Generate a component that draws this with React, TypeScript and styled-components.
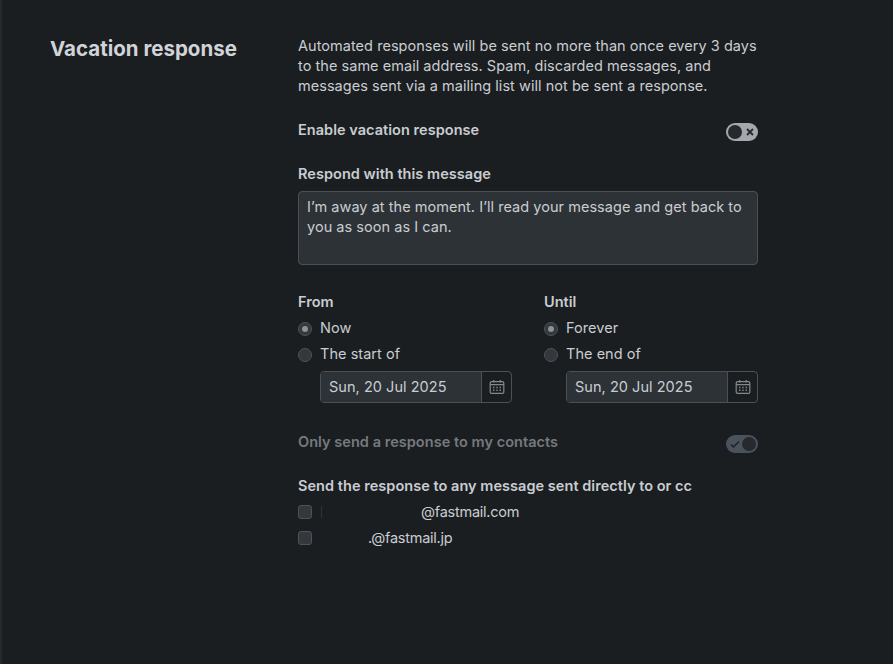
import React from 'react';
import styled, { createGlobalStyle } from 'styled-components';

const Global = createGlobalStyle`
  html, body { margin: 0; padding: 0; background: #1b1e21; }
  body { font-family: "Inter", "Liberation Sans", sans-serif; color: #c9cdd1; }
`;
const Page = styled.div`
  width: 893px; height: 664px; box-sizing: border-box; overflow: hidden;
  border-left: 2px solid #26292d; padding: 36px 0 0 48px;
  display: grid; grid-template-columns: 248px 460px; 
`;
const Title = styled.h2`
  margin: 0; font-size: 20.5px; line-height: 26px; font-weight: 700; color: #d0d3d7;
`;
const Column = styled.div`display: flex; flex-direction: column; font-size: 14.5px; line-height: 20px; letter-spacing: 0.04px;`;
const Intro = styled.p`margin: 0 0 24px; color: #c9cdd1;`;
const SwitchRow = styled.div<{ $gap: number; $muted?: boolean }>`
  display: flex; justify-content: space-between; align-items: flex-start; margin-bottom: ${p => p.$gap}px;
  font-weight: 600; color: ${p => (p.$muted ? '#76797d' : '#c9cdd1')};
`;
const Track = styled.span<{ $on?: boolean }>`
  width: 32px; height: 18px; border-radius: 9px; margin-top: 3px; box-sizing: border-box; padding: 2px;
  display: flex; align-items: center; justify-content: space-between; flex-direction: ${p => (p.$on ? 'row' : 'row-reverse')};
  background: ${p => (p.$on ? '#4a525b' : '#a5a8ad')};
`;
const Knob = styled.span`width: 14px; height: 14px; border-radius: 50%; background: #26292d; box-sizing: border-box;`;
const Label = styled.div`font-weight: 600; color: #c9cdd1; margin-bottom: 7px;`;
const Area = styled.div`
  box-sizing: border-box; height: 74px; padding: 5px 8px; margin-bottom: 27px; border-radius: 4px;
  background: #2d3237; border: 1px solid #4a5056; color: #c9cdd1;
`;
const Dates = styled.div`display: grid; grid-template-columns: 246px 214px; margin-bottom: 29px;`;
const DateLabel = styled(Label)`margin-bottom: 3px;`;
const ListLabel = styled(Label)`margin-bottom: 3px;`;
const Choice = styled.div`display: flex; align-items: center; gap: 8px; height: 26px;`;
const Radio = styled.span<{ $on?: boolean }>`
  width: 14px; height: 14px; border-radius: 50%; box-sizing: border-box; border: 1px solid #4d5359; background: #33383d;
  display: flex; align-items: center; justify-content: center; margin-top: 1px;
  &::after { content: ""; width: 6px; height: 6px; border-radius: 50%; background: ${p => (p.$on ? '#8d9196' : 'transparent')}; }
`;
const DateBox = styled.div`
  display: flex; height: 32px; box-sizing: border-box; margin: 4px 0 0 22px; width: 192px; border: 1px solid #4a5056; border-radius: 4px; overflow: hidden;
`;
const DateText = styled.div`flex: 1; background: #2d3237; padding: 0 8px; line-height: 30px;`;
const DateIcon = styled.div`width: 29px; display: flex; align-items: center; justify-content: center; border-left: 1px solid #4a5056; color: #85898d;`;
const Check = styled.span`width: 14px; height: 14px; box-sizing: border-box; border-radius: 3px; border: 1px solid #4d5359; background: #33383d;`;
const Address = styled.span<{ $pad: number }>`padding-left: ${p => p.$pad}px; letter-spacing: -0.25px;`;
const Tick = styled.span`width: 1px; height: 12px; margin-left: 1px; margin-right: -8px; background: #2f3337;`;

const Cal = () => (
  <svg width="16" height="16" viewBox="0 0 16 16" fill="none" stroke="currentColor" strokeWidth="1.2">
    <rect x="1.2" y="2.6" width="13.6" height="11.8" rx="1.5" />
    <path d="M1.2 5.6h13.6M4.8 1v2.5M11.2 1v2.5" />
    <path d="M4 8.5h1.4M7.3 8.5h1.4M10.6 8.5h1.4M4 11.3h1.4M7.3 11.3h1.4M10.6 11.3h1.4" strokeWidth="1.4" />
  </svg>
);

const DateColumn = ({ title, a, b }: { title: string; a: string; b: string }) => (
  <div>
    <DateLabel>{title}</DateLabel>
    <Choice><Radio $on /><span>{a}</span></Choice>
    <Choice><Radio /><span>{b}</span></Choice>
    <DateBox><DateText>Sun, 20 Jul 2025</DateText><DateIcon><Cal /></DateIcon></DateBox>
  </div>
);

export default function App() {
  return (
    <Page>
      <Global />
      <Title>Vacation response</Title>
      <Column>
        <Intro>
          Automated responses will be sent no more than once every 3 days<br />
          to the same email address. Spam, discarded messages, and<br />
          messages sent via a mailing list will not be sent a response.
        </Intro>
        <SwitchRow $gap={23}>
          Enable vacation response
          <Track>
            <svg width="10" height="10" viewBox="0 0 10 10" stroke="#26292d" strokeWidth="1.8" style={{ marginRight: 1 }}><path d="M2 2l6 6M8 2l-6 6" /></svg>
            <Knob />
          </Track>
        </SwitchRow>
        <Label>Respond with this message</Label>
        <Area>I’m away at the moment. I’ll read your message and get back to you as soon as I can.</Area>
        <Dates>
          <DateColumn title="From" a="Now" b="The start of" />
          <DateColumn title="Until" a="Forever" b="The end of" />
        </Dates>
        <SwitchRow $gap={23} $muted>
          Only send a response to my contacts
          <Track $on>
            <svg width="10" height="10" viewBox="0 0 10 10" fill="none" stroke="#1f2327" strokeWidth="1.5" style={{ marginLeft: 2 }}><path d="M1 5.5l2.5 2.5L9 2.5" /></svg>
            <Knob />
          </Track>
        </SwitchRow>
        <ListLabel>Send the response to any message sent directly to or cc</ListLabel>
        <Choice><Check /><Tick /><Address $pad={99}>@fastmail.com</Address></Choice>
        <Choice><Check /><Address $pad={48}>.@fastmail.jp</Address></Choice>
      </Column>
    </Page>
  );
}
